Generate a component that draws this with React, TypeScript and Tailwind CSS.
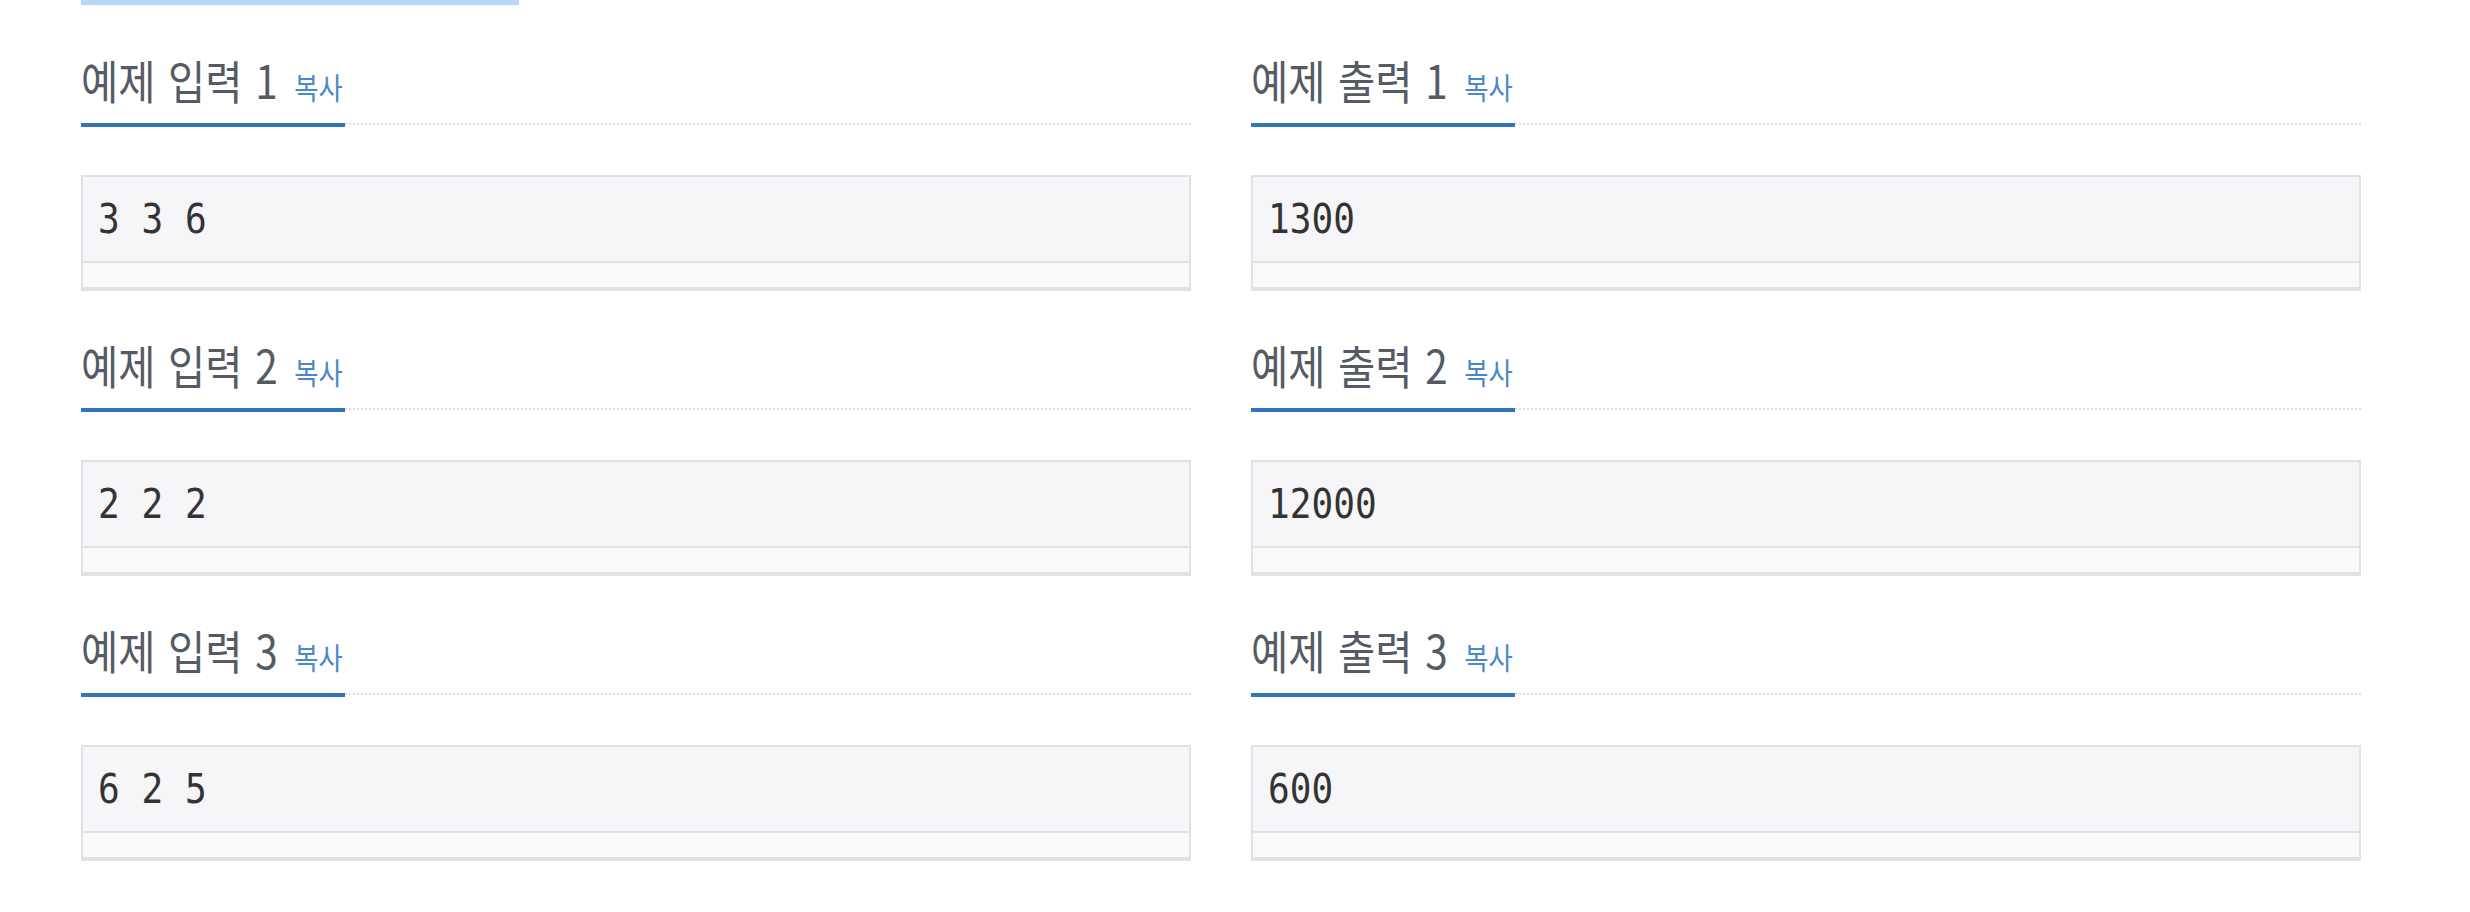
import * as React from "react";

type Sample = {
  n: number;
  input: string;
  output: string;
};

const samples: Sample[] = [
  { n: 1, input: "3 3 6", output: "1300" },
  { n: 2, input: "2 2 2", output: "12000" },
  { n: 3, input: "6 2 5", output: "600" },
];

function Headline({ title }: { title: string }) {
  return (
    <div className="border-b-2 border-dotted border-[#dcdce4]">
      <h2 className="w-[264px] pb-[12px] border-b-4 border-[#3275bb] -mb-[4px]">
        <div className="flex items-baseline whitespace-nowrap origin-left scale-x-[0.88] font-['Noto_Sans_CJK_KR',sans-serif]">
          <span className="text-[46px] leading-[64px] font-normal [word-spacing:4px] text-[#545b64]">
            {title}
          </span>
          <span className="ml-[19px] text-[30px] leading-none text-[#4a88c9] cursor-pointer">
            복사
          </span>
        </div>
      </h2>
    </div>
  );
}

function SampleBox({ text }: { text: string }) {
  return (
    <div className="mt-[50px] border-2 border-b-4 border-[#e1e1e8]">
      <pre className="h-[84px] flex items-center pl-[15px] bg-[#f6f6f8]">
        <span className="origin-left scale-x-[0.88] whitespace-pre text-[41px] leading-[46px] text-[#333333] font-['DejaVu_Sans_Mono',monospace]">
          {text}
        </span>
      </pre>
      <div className="h-[26px] border-t-2 border-[#e1e1e8] bg-[#f9f9f9]" />
    </div>
  );
}

export default function App() {
  return (
    <div className="min-h-[912px] w-[2470px] bg-white">
      <div className="ml-[81px] h-[5px] w-[438px] bg-[#b8d6fa]" />
      <div className="ml-[81px] mt-[42px] w-[2280px] grid grid-cols-2 gap-x-[60px] gap-y-[41px]">
        {samples.map((s) => (
          <React.Fragment key={s.n}>
            <section>
              <Headline title={`예제 입력 ${s.n}`} />
              <SampleBox text={s.input} />
            </section>
            <section>
              <Headline title={`예제 출력 ${s.n}`} />
              <SampleBox text={s.output} />
            </section>
          </React.Fragment>
        ))}
      </div>
    </div>
  );
}
